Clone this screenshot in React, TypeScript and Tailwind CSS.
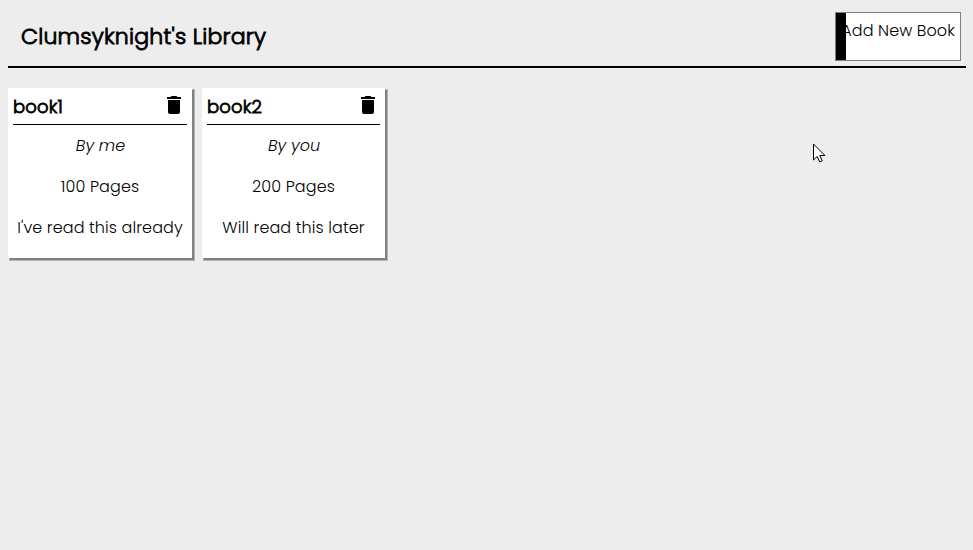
import { MdDelete } from "react-icons/md";

type Book = { title: string; author: string; pages: number; status: string };

const books: Book[] = [
  { title: "book1", author: "me", pages: 100, status: "I've read this already" },
  { title: "book2", author: "you", pages: 200, status: "Will read this later" },
];

function BookCard({ book }: { book: Book }) {
  return (
    <article className="group h-[170px] bg-white px-[5px] text-center shadow-[2px_2px_0_gray,2px_2px_0_1px_#b4b4b4]">
      <div className="flex h-[37px] items-center justify-between border-b border-black">
        <h2 className="mt-0.5 text-[18px] leading-7 font-light tracking-[0.15px] [-webkit-text-stroke:0.8px_black]">{book.title}</h2>
        <MdDelete className="-mt-0.5 size-6 group-first:mr-px" />
      </div>
      <p className="mt-[9px] pl-px leading-6 tracking-normal italic">By {book.author}</p>
      <p className="mt-[17px] leading-6">{book.pages} Pages</p>
      <p className="mt-[17px] leading-6 whitespace-nowrap">{book.status}</p>
    </article>
  );
}

export default function App() {
  return (
    <div className="relative h-[550px] overflow-hidden bg-[#ededed] pl-2 font-['Poppins','Open_Sans',sans-serif] text-base font-light tracking-[0.1px] text-black">
      <header className="flex h-[68px] w-[958px] justify-between border-b-2 border-black pr-[5px] pl-[13px]">
        <h1 className="mt-[19px] text-[22px] leading-9 font-light tracking-[0.23px] whitespace-nowrap [-webkit-text-stroke:0.9px_black]">Clumsyknight's Library</h1>
        <button className="mt-3 h-[49px] w-[126px] border border-[gray] bg-[linear-gradient(to_right,black_10px,white_10px)] pr-[5px] pb-3 text-right whitespace-nowrap">
          Add New Book
        </button>
      </header>
      <main className="mt-5 grid grid-cols-[184px_183px] gap-[10px]">
        {books.map((book) => (
          <BookCard key={book.title} book={book} />
        ))}
      </main>
      <svg className="absolute top-[143px] left-[813px]" width="13" height="21" viewBox="0 0 13 21">
        <path d="M.5 1v16l3.7-3.5 2.5 5.4 2.5-1.1-2.4-5.3h5.1z" fill="white" stroke="black" />
      </svg>
    </div>
  );
}
